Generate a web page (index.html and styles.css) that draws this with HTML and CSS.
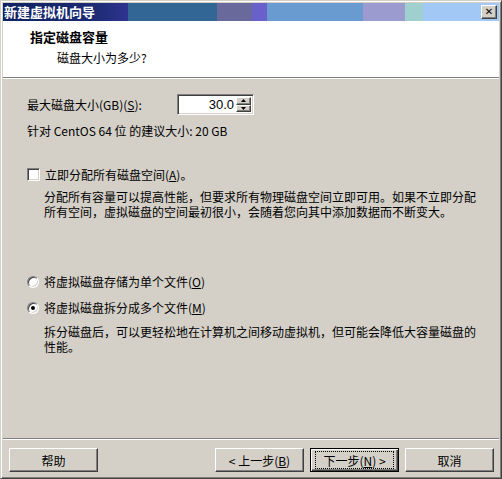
FILE: index.html
```html
<!DOCTYPE html>
<html lang="zh-CN">
<head>
<meta charset="utf-8">
<title>新建虚拟机向导</title>
<link rel="stylesheet" href="styles.css">
</head>
<body>
<div class="window">
  <div class="titlebar">
    <span class="title">新建虚拟机向导</span>
    <span class="tb-glyphbox"><span class="tb-x">✕</span></span>
  </div>
  <div class="header">
    <div class="h-title">指定磁盘容量</div>
    <div class="h-sub">磁盘大小为多少?</div>
  </div>
  <div class="content">
    <div class="size-row">
      <span class="size-label">最大磁盘大小(GB)(<u>S</u>):</span>
      <div class="spin">
        <div class="spin-value">30.0</div>
        <div class="spin-btns">
          <div class="spin-btn"><svg width="5" height="3" viewBox="0 0 5 3"><path d="M2.5 0L5 3H0z" fill="#000"/></svg></div>
          <div class="spin-btn"><svg width="5" height="3" viewBox="0 0 5 3"><path d="M0 0h5L2.5 3z" fill="#000"/></svg></div>
        </div>
      </div>
    </div>
    <div class="hint">针对 CentOS 64 位 的建议大小: 20 GB</div>
    <div class="check-row"><span class="checkbox"></span><span>立即分配所有磁盘空间(<u>A</u>)。</span></div>
    <div class="desc desc-alloc">
      <span class="line">分配所有容量可以提高性能，但要求所有物理磁盘空间立即可用。如果不立即分配</span>
      <span class="line">所有空间，虚拟磁盘的空间最初很小，会随着您向其中添加数据而不断变大。</span>
    </div>
    <div class="radio-row radio-first"><span class="radio"></span><span>将虚拟磁盘存储为单个文件(<u>O</u>)</span></div>
    <div class="radio-row radio-second"><span class="radio checked"></span><span>将虚拟磁盘拆分成多个文件(<u>M</u>)</span></div>
    <div class="desc desc-split">
      <span class="line">拆分磁盘后，可以更轻松地在计算机之间移动虚拟机，但可能会降低大容量磁盘的</span>
      <span class="line">性能。</span>
    </div>
  </div>
  <div class="footer">
    <span class="btn">帮助</span>
    <span class="spacer"></span>
    <span class="btn">&lt; 上一步(<u>B</u>)</span>
    <span class="btn default"><span class="focus">下一步(<u>N</u>) &gt;</span></span>
    <span class="btn">取消</span>
  </div>
</div>
</body>
</html>
```
FILE: styles.css
```css
* { box-sizing: border-box; }
html, body { margin: 0; padding: 0; }
body {
  width: 502px;
  height: 479px;
  overflow: hidden;
  background: #d4d0c8;
  font-family: "Noto Sans CJK SC", "Liberation Sans", sans-serif;
  font-size: 12px;
  color: #000;
}
u { text-decoration: underline; text-underline-offset: 1px; }

.window {
  width: 502px;
  height: 479px;
  display: flex;
  flex-direction: column;
  background: #d4d0c8;
  border: 1px solid;
  border-color: #d4d0c8 #404040 #404040 #d4d0c8;
  box-shadow: inset 1px 1px #ffffff, inset -1px -1px #808080;
  padding: 2px;
}

.titlebar {
  position: relative;
  height: 18px;
  flex: none;
  display: flex;
  align-items: center;
  padding: 0 2px 0 1px;
  background: linear-gradient(to right,
    #0e2262 0, #1c2a72 90px, #2e3490 125px,
    #326795 125px, #326795 214px,
    #69699b 214px, #69699b 249px,
    #6a60cc 249px, #6a60cc 264px,
    #6a9bd0 264px, #6a9bd0 360px,
    #9c9bd0 360px, #9c9bd0 402px,
    #a0cfcf 402px, #a0cfcf 420px,
    #a2c9f6 420px, #a2c9f6 100%);
}
.title {
  color: #fff;
  font-weight: bold;
  font-size: 13px;
  line-height: 16px;
}
.tb-glyphbox {
  position: absolute;
  right: 2px;
  top: 2px;
  z-index: 2;
  width: 16px;
  height: 14px;
  display: flex;
  align-items: center;
  justify-content: center;
  background-color: #d4d0c8;
  border-top: 1px solid #ffffff;
  border-left: 1px solid #ffffff;
  border-right: 1px solid #404040;
  border-bottom: 1px solid #404040;
  box-shadow: inset -1px -1px #808080;
}
.tb-x {
  font-family: "DejaVu Sans", sans-serif;
  font-size: 10px;
  font-weight: bold;
  line-height: 10px;
  color: #000;
}

.header {
  height: 57px;
  flex: none;
  background: #fff;
  padding: 8px 0 0 27px;
  border-bottom: 1px solid #808080;
  box-shadow: 0 1px #ffffff;
  margin-bottom: 1px;
}
.h-title {
  font-weight: bold;
  font-size: 13px;
  line-height: 16px;
}
.h-sub {
  margin: 5px 0 0 27px;
  line-height: 16px;
}

.content {
  flex: 1;
  padding: 15px 0 0 24px;
}
.size-row {
  display: flex;
  align-items: center;
  height: 21px;
}
.size-label {
  width: 150px;
  line-height: 15px;
}
.spin {
  width: 77px;
  height: 21px;
  display: flex;
  background: #fff;
  border: 1px solid;
  border-color: #808080 #ffffff #ffffff #808080;
  box-shadow: inset 1px 1px #404040, inset -1px -1px #d4d0c8;
  padding: 2px;
}
.spin-value {
  flex: 1;
  text-align: right;
  padding-right: 2px;
  font-family: "Liberation Sans", sans-serif;
  font-size: 13px;
  line-height: 15px;
}
.spin-btns {
  width: 15px;
  display: flex;
  flex-direction: column;
}
.spin-btn {
  flex: 1;
  display: flex;
  align-items: center;
  justify-content: center;
  background: #d4d0c8;
  border: 1px solid;
  border-color: #ffffff #404040 #404040 #ffffff;
  box-shadow: inset -1px -1px #808080;
}

.hint {
  margin-top: 8px;
  line-height: 15px;
}

.check-row {
  margin-top: 29px;
  display: flex;
  align-items: center;
  gap: 5px;
  line-height: 15px;
}
.checkbox {
  width: 13px;
  height: 13px;
  background: #fff;
  border: 1px solid;
  border-color: #808080 #ffffff #ffffff #808080;
  box-shadow: inset 1px 1px #404040, inset -1px -1px #d4d0c8;
}

.desc {
  margin-left: 17px;
  white-space: nowrap;
}
.desc .line {
  display: block;
  height: 15px;
  line-height: 15px;
}
.desc-alloc { margin-top: 7px; }
.desc-split { margin-top: 9px; }

.radio-row {
  display: flex;
  align-items: center;
  gap: 5px;
  line-height: 15px;
}
.radio-first { margin-top: 55px; }
.radio-second { margin-top: 11px; }
.radio {
  width: 12px;
  height: 12px;
  border-radius: 50%;
  background: #fff;
  border: 1px solid;
  border-color: #808080 #ffffff #ffffff #808080;
  box-shadow: inset 1px 1px #404040, inset -1px -1px #d4d0c8;
  display: flex;
  align-items: center;
  justify-content: center;
}
.radio.checked::after {
  content: "";
  width: 4px;
  height: 4px;
  border-radius: 50%;
  background: #000;
}

.footer {
  flex: none;
  display: flex;
  gap: 6px;
  padding: 9px 5px 4px 6px;
  border-top: 1px solid #808080;
  box-shadow: inset 0 1px #ffffff;
}
.spacer { flex: 1; }
.btn {
  width: 89px;
  height: 24px;
  display: flex;
  align-items: center;
  justify-content: center;
  background: #d4d0c8;
  border: 1px solid;
  border-color: #ffffff #404040 #404040 #ffffff;
  box-shadow: inset -1px -1px #808080, inset 1px 1px #d4d0c8;
  line-height: 15px;
}
.btn.default {
  border: 1px solid #000;
  box-shadow: inset 1px 1px #ffffff, inset -1px -1px #404040, inset -2px -2px #808080;
}
.focus {
  width: 77px;
  height: 16px;
  display: flex;
  align-items: center;
  justify-content: center;
  outline: 1px dotted #000;
}
```
